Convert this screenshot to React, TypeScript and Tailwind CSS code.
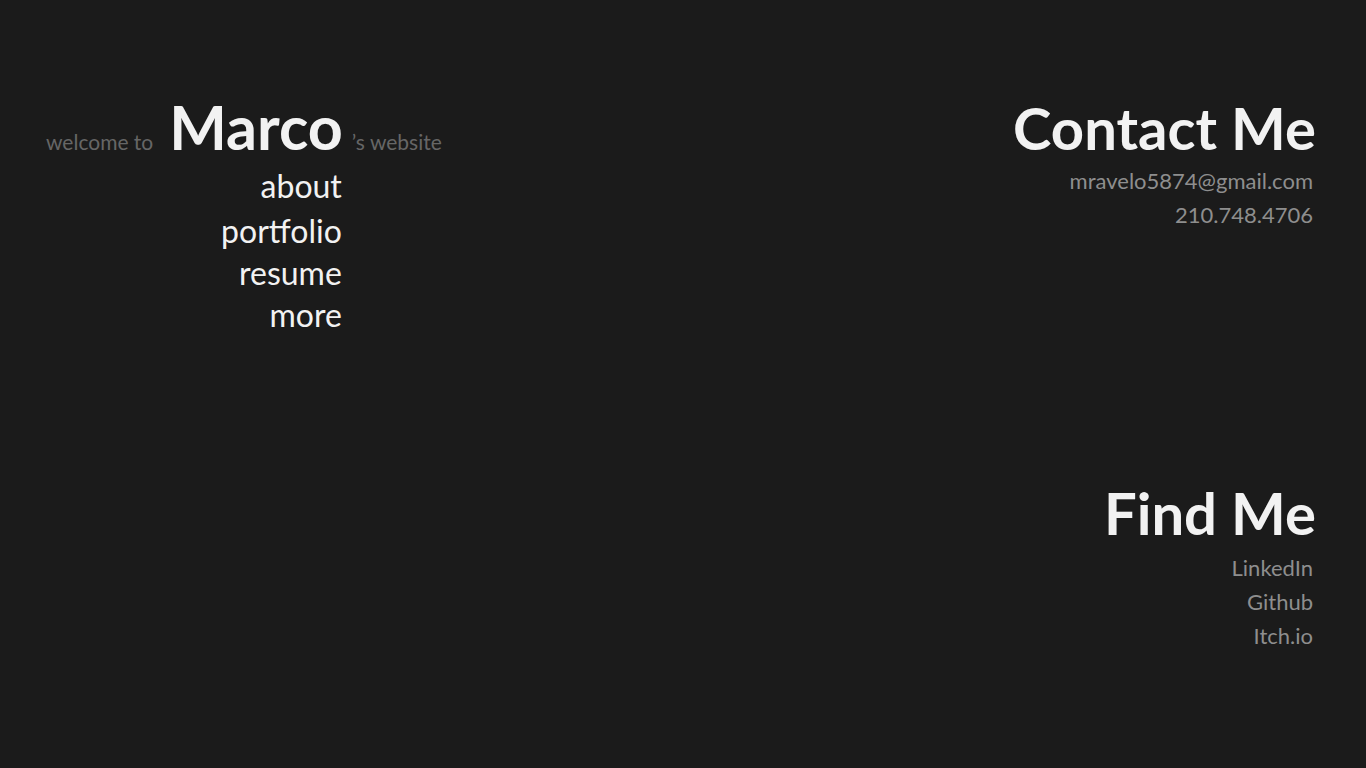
export default function App() {
  const font = { fontFamily: '"Lato", "Open Sans", sans-serif' };
  return (
    <div className="min-h-screen w-full bg-[#1b1b1b] flex justify-between pl-[46px] pr-[53px]" style={font}>
      {/* left: greeting + nav */}
      <div className="pt-[92px]">
        <div className="grid grid-cols-[auto_auto_auto] items-baseline">
          <span className="text-[21px] text-[#666666] mr-[16px]">welcome to</span>
          <h1 className="text-[61px] font-bold text-[#f2f2f2] leading-[70px]">Marco</h1>
          <span className="text-[21px] text-[#666666] ml-[9px]">’s website</span>
          <nav className="col-start-2 flex flex-col items-end text-[32px] leading-[42px] text-[#f2f2f2] mt-[3px] mr-[1px]">
            <a>about</a>
            <a className="mt-[3px]">portfolio</a>
            <a>resume</a>
            <a>more</a>
          </nav>
        </div>
      </div>

      {/* right: contact + links */}
      <div className="flex flex-col items-end pt-[93px]">
        <h2 className="text-[58px] font-bold text-[#f2f2f2] leading-[70px] -mr-[3px]">Contact Me</h2>
        <div className="flex flex-col items-end text-[22px] leading-[34px] text-[#8e8e8e] mt-[1px]">
          <span>mravelo5874@gmail.com</span>
          <span>210.748.4706</span>
        </div>
        <h2 className="text-[58px] font-bold text-[#f2f2f2] leading-[70px] mt-[246px] -mr-[3px]">Find Me</h2>
        <div className="flex flex-col items-end text-[22px] leading-[34px] text-[#8e8e8e] mt-[3px]">
          <a>LinkedIn</a>
          <a>Github</a>
          <a>Itch.io</a>
        </div>
      </div>
    </div>
  );
}
